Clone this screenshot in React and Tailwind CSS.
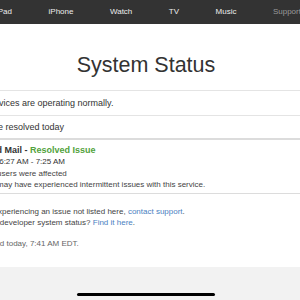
export default function App() {
  const navItems = ["iPad", "iPhone", "Watch", "TV", "Music"];
  return (
    <div className="w-[300px] h-[300px] overflow-hidden bg-white flex flex-col font-['Liberation_Sans',Arial,sans-serif] text-[#333]">
      <nav className="h-[24px] shrink-0 bg-[#333] overflow-hidden">
        <div className="ml-[-4px] h-full flex items-center gap-[36.5px] text-[8px] text-[#ededed] whitespace-nowrap">
          {navItems.map((n) => (
            <span key={n}>{n}</span>
          ))}
          <span className="text-[#9a9a9a]">Support</span>
        </div>
      </nav>

      <main className="ml-[-26px] w-[344px] shrink-0 whitespace-nowrap">
        <h1 className="mt-[29px] text-center text-[21.5px] leading-[24px] text-[#333]">
          System Status
        </h1>

        <div className="mt-[13px] border-t border-[#e4e4e4]">
          <div className="h-[25px] pt-[2px] flex items-center text-[9px] border-b border-[#e4e4e4]">
            All services are operating normally.
          </div>
          <div className="h-[24px] pt-[2px] flex items-center text-[9px] border-b-2 border-[#dcdcdc]">
            1 Issue resolved today
          </div>
          <div className="pt-[5px] pb-[2px] border-b border-[#dcdcdc]">
            <div className="text-[9px] leading-[11px] font-bold">
              iCloud Mail - <span className="text-[#52a23c]">Resolved Issue</span>
            </div>
            <div className="text-[8px] leading-[11.5px]">Today, 6:27 AM - 7:25 AM</div>
            <div className="text-[8px] leading-[11.5px] text-[#444]">Some users were affected</div>
            <div className="text-[8px] leading-[11.5px] text-[#444]">
              Users may have experienced intermittent issues with this service.
            </div>
          </div>
        </div>

        <div className="ml-[-16px] pt-[12px] text-[8px] leading-[11.5px] text-[#444]">
          <div>
            If you are experiencing an issue not listed here,{" "}
            <span className="text-[#4a7fbf]">contact support</span>.
          </div>
          <div>
            Looking for developer system status?{" "}
            <span className="text-[#4a7fbf]">Find it here</span>.
          </div>
          <div className="mt-[9px] text-[#666]">Last updated today, 7:41 AM EDT.</div>
        </div>
      </main>

      <div className="mt-auto h-[33px] shrink-0 bg-[#f2f2f2] flex justify-center items-end pb-[4px]">
        <div className="ml-[-8px] w-[138px] h-[3px] rounded-full bg-black" />
      </div>
    </div>
  );
}
